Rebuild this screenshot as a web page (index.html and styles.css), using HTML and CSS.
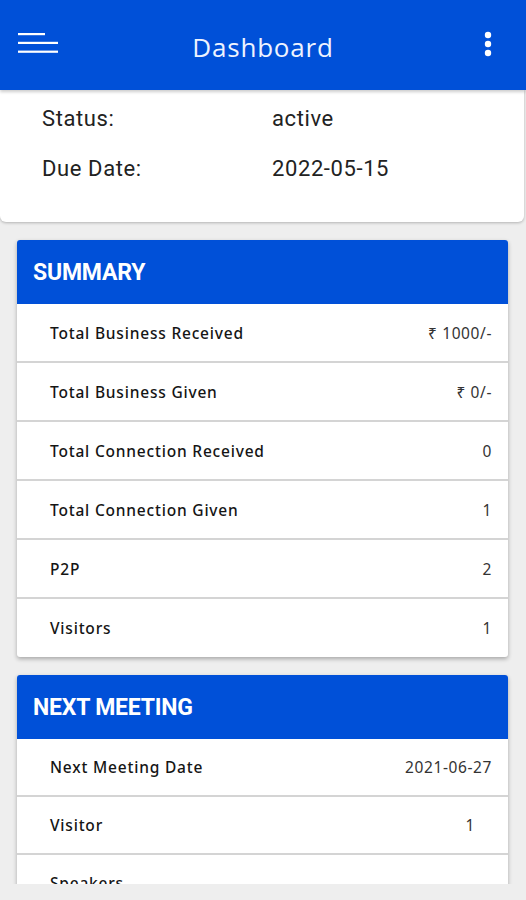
FILE: index.html
```html
<!DOCTYPE html>
<html lang="en">
<head>
  <meta charset="UTF-8">
  <meta name="viewport" content="width=device-width, initial-scale=1.0">
  <title>Dashboard</title>
  <link rel="stylesheet" href="styles.css">
</head>
<body>
  <header class="topbar">
    <svg class="menu-icon" width="40" height="22" viewBox="0 0 40 22">
      <rect x="0" y="0" width="27" height="2.2" fill="#fff"/>
      <rect x="0" y="8.8" width="40" height="2.2" fill="#fff"/>
      <rect x="0" y="17.6" width="40" height="2.2" fill="#fff"/>
    </svg>
    <h1>Dashboard</h1>
    <svg class="more-icon" width="8" height="26" viewBox="0 0 8 26">
      <circle cx="4" cy="4" r="3.2" fill="#fff"/>
      <circle cx="4" cy="13" r="3.2" fill="#fff"/>
      <circle cx="4" cy="22" r="3.2" fill="#fff"/>
    </svg>
  </header>

  <div class="member">
    <div class="member-row">
      <span class="member-key">Status:</span>
      <span>active</span>
    </div>
    <div class="member-row">
      <span class="member-key">Due Date:</span>
      <span>2022-05-15</span>
    </div>
  </div>

  <div class="panel">
    <h2 class="panel-head">SUMMARY</h2>
    <div class="item"><span>Total Business Received</span><span class="val">₹ 1000/-</span></div>
    <div class="item"><span>Total Business Given</span><span class="val">₹ 0/-</span></div>
    <div class="item"><span>Total Connection Received</span><span class="val">0</span></div>
    <div class="item"><span>Total Connection Given</span><span class="val">1</span></div>
    <div class="item"><span>P2P</span><span class="val">2</span></div>
    <div class="item"><span>Visitors</span><span class="val">1</span></div>
  </div>

  <div class="panel">
    <h2 class="panel-head">NEXT MEETING</h2>
    <div class="item short"><span>Next Meeting Date</span><span class="val">2021-06-27</span></div>
    <div class="item short"><span>Visitor</span><span class="val inset">1</span></div>
    <div class="item short"><span>Speakers</span><span class="val"></span></div>
  </div>

  <div class="bottom-strip"></div>
</body>
</html>
```

FILE: styles.css
```css
body {
  margin: 0;
  background: #eeeeee;
  font-family: Roboto, "Liberation Sans", sans-serif;
  height: 900px;
  overflow: hidden;
  position: relative;
}

.topbar {
  background: #0050d8;
  height: 90px;
  display: flex;
  align-items: center;
  justify-content: space-between;
  padding: 0 34px 0 18px;
  box-sizing: border-box;
  position: relative;
  z-index: 2;
  box-shadow: 0 2px 3px rgba(0,0,0,0.2);
}

.topbar h1 {
  margin: 0;
  font-family: "Open Sans", sans-serif;
  font-weight: 400;
  font-size: 26px;
  color: #eef3ff;
  letter-spacing: 0.8px;
  position: absolute;
  left: 0;
  right: 0;
  text-align: center;
  top: 29px;
  line-height: 36px;
}

.menu-icon {
  margin-top: -2px;
}

.more-icon {
  margin-top: -2px;
}

.member {
  background: #fff;
  width: 524px;
  height: 132px;
  box-sizing: border-box;
  padding: 15px 0 0 42px;
  border-radius: 0 0 6px 6px;
  box-shadow: 0 1px 3px rgba(0,0,0,0.25);
  position: relative;
  z-index: 1;
}

.member-row {
  display: flex;
  font-size: 22px;
  letter-spacing: 0.6px;
  color: #222;
  height: 50px;
  line-height: 28px;
}

.member-key {
  width: 230px;
}

.panel {
  margin: 18px 18px 0 17px;
  background: #fff;
  border-radius: 3px;
  box-shadow: 0 2px 4px rgba(0,0,0,0.3);
  overflow: hidden;
}

.panel-head {
  margin: 0;
  background: #0050d8;
  color: #fff;
  font-size: 23px;
  font-weight: 700;
  height: 64px;
  line-height: 66px;
  padding-left: 16px;
  letter-spacing: -0.2px;
}

.item {
  display: flex;
  justify-content: space-between;
  align-items: center;
  height: 57px;
  border-bottom: 2px solid #d4d4d4;
  padding: 0 16px 0 33px;
  font-family: "Noto Sans", sans-serif;
  font-size: 15.5px;
  font-weight: 500;
  letter-spacing: 0.8px;
  color: #151515;
}

.item:last-child {
  border-bottom: none;
  height: 58px;
}

.item.short {
  height: 56px;
}

.val {
  font-weight: 400;
  color: #333;
  letter-spacing: 0.6px;
}

.val.inset {
  margin-right: 17px;
}

.bottom-strip {
  position: absolute;
  left: 0;
  right: 0;
  top: 884px;
  height: 16px;
  background: #eeeeee;
  z-index: 3;
}
```
